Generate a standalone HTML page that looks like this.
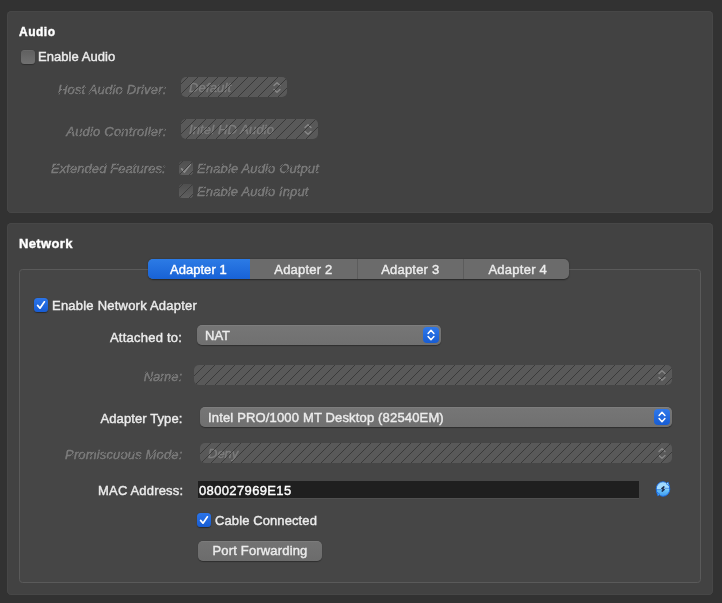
<!DOCTYPE html>
<html lang="en">
<head>
<meta charset="utf-8">
<title>Settings - Audio / Network</title>
<style>
  html, body { margin: 0; padding: 0; }
  body {
    width: 722px; height: 603px; overflow: hidden; position: relative;
    background: #323232;
    font-family: "Liberation Sans", sans-serif; font-size: 13px; color: #ececec;
    -webkit-font-smoothing: antialiased;
  }
  .abs { position: absolute; }
  .panel {
    position: absolute; left: 7px; width: 706px;
    background: #424242; border-radius: 4.5px;
    box-shadow: inset 0 0 0 1px #474747;
  }
  .t { position: absolute; line-height: 16px; height: 16px; white-space: pre; will-change: transform; -webkit-text-stroke: 0.4px currentColor; }
  .b { font-weight: bold; color: #ffffff; }
  .r { text-align: right; }
  /* disabled (hatched) look */
  .dis { font-style: italic; color: #7c7c7c; -webkit-text-stroke: 0.4px #7c7c7c; margin-top: 0.7px; }
  .hatch::after {
    content: ""; position: absolute; left: 0; top: 0; right: 0; bottom: 0;
    background-image: linear-gradient(135deg,
      var(--hc) 0, var(--hc) 3.0%, transparent 3.0%, transparent 47.0%,
      var(--hc) 47.0%, var(--hc) 53.0%, transparent 53.0%, transparent 97.0%,
      var(--hc) 97.0%, var(--hc) 100%);
    background-size: 10px 10px;
    background-position: var(--hp, 0px) 0px;
    pointer-events: none; border-radius: inherit;
  }
  .p1 { --hc: #424242; }
  .p2 { --hc: #464646; }
  .dd-dis {
    position: absolute; height: 20px; border-radius: 5px; background: #595959; --hc: #393939;
  }
  .dd {
    position: absolute; height: 20px; border-radius: 5px;
    background: linear-gradient(#767676, #707070);
    box-shadow: 0 0.5px 1px rgba(0,0,0,0.35), inset 0 0.5px 0 rgba(255,255,255,0.12);
  }
  .stepper {
    position: absolute; right: 2px; top: 2px; width: 16px; height: 16px; border-radius: 4px;
    background: linear-gradient(#2f78ea, #175cd3);
  }
  .cb {
    position: absolute; width: 14px; height: 14px; border-radius: 3.5px;
  }
  .cb.on { background: linear-gradient(#2b74e8, #175cd3); box-shadow: 0 0.5px 1px rgba(0,0,0,0.4); }
  .cb.off { background: linear-gradient(#5f5f5f, #717171); box-shadow: 0 0.5px 1px rgba(0,0,0,0.3), inset 0 0.5px 0 rgba(255,255,255,0.1); }
  .cb.disabled { background: linear-gradient(#4f4f4f, #5f5f5f); --hc: #3d3d3d; --hp: 4px; border-radius: 3.5px; }
  svg { position: absolute; overflow: visible; }
</style>
</head>
<body>

<!-- ================= AUDIO PANEL ================= -->
<div class="panel" style="top:11px; height:202px;"></div>

<div class="t b" style="left:19px; top:24px; font-size:12px; letter-spacing:0.5px;">Audio</div>

<div class="cb off" style="left:21px; top:50px;"></div>
<div class="t" style="left:38.4px; top:49.1px; letter-spacing:0.05px;">Enable Audio</div>

<div class="t dis r hatch p1" style="left:40px; width:126.5px; top:81px; letter-spacing:0.2px;">Host Audio Driver:</div>
<div class="dd-dis hatch" style="left:181px; top:77px; width:106px; --hp:7px;">
  <div class="t dis" style="left:7.7px; top:2px; letter-spacing:0.16px;">Default</div>
  <svg style="left:91px; top:4px;" width="10" height="13" viewBox="0 0 10 13"><path d="M2 4.6 L5 1.7 L8 4.6 M2 8.4 L5 11.3 L8 8.4" fill="none" stroke="#868686" stroke-width="1.4" stroke-linecap="round" stroke-linejoin="round"/></svg>
</div>

<div class="t dis r hatch p1" style="left:40px; width:126.5px; top:123px; letter-spacing:0.2px;">Audio Controller:</div>
<div class="dd-dis hatch" style="left:181px; top:119px; width:137px; --hp:5px;">
  <div class="t dis" style="left:7.5px; top:2px; letter-spacing:0.13px;">Intel HD Audio</div>
  <svg style="left:121.5px; top:4px;" width="10" height="13" viewBox="0 0 10 13"><path d="M2 4.6 L5 1.7 L8 4.6 M2 8.4 L5 11.3 L8 8.4" fill="none" stroke="#868686" stroke-width="1.4" stroke-linecap="round" stroke-linejoin="round"/></svg>
</div>

<div class="t dis r hatch p1" style="left:40px; width:125.8px; top:160.3px; letter-spacing:0.08px;">Extended Features:</div>
<div class="cb disabled hatch" style="left:179px; top:161px;">
  <svg style="left:0; top:0;" width="14" height="14" viewBox="0 0 14 14"><path d="M2.6 7.8 L5.4 11.0 L11.2 3.4" fill="none" stroke="#8c8c8c" stroke-width="1.7" stroke-linecap="round" stroke-linejoin="round"/></svg>
</div>
<div class="t dis hatch p1" style="left:197px; top:160.1px; letter-spacing:0.13px;">Enable Audio Output</div>
<div class="cb disabled hatch" style="left:179px; top:184.2px;"></div>
<div class="t dis hatch p1" style="left:197px; top:183.1px; letter-spacing:0.12px;">Enable Audio Input</div>

<!-- ================= NETWORK PANEL ================= -->
<div class="panel" style="top:223px; height:372px;"></div>

<div class="t b" style="left:19px; top:235.5px; letter-spacing:0.36px;">Network</div>

<!-- tab pane -->
<div class="abs" style="left:19px; top:269px; width:682px; height:314px; box-sizing:border-box; border:1px solid #5a5a5a; border-radius:3.5px; background:#464646;"></div>

<!-- tab bar -->
<div class="abs" style="left:148px; top:259px; width:421px; height:20px; border-radius:5px; overflow:hidden; background:#6b6b6b; box-shadow:0 0.5px 1.5px rgba(0,0,0,0.45);">
  <div class="abs" style="left:0; top:0; width:102px; height:20px; background:linear-gradient(#2c7be5,#1862d6);"></div>
  <div class="abs" style="left:208.5px; top:0; width:1px; height:20px; background:#5c5c5c;"></div>
  <div class="abs" style="left:315px; top:0; width:1px; height:20px; background:#5c5c5c;"></div>
</div>
<div class="t" style="left:169.6px; top:261.5px; color:#fff; letter-spacing:0.03px;">Adapter 1</div>
<div class="t" style="left:250px; width:106.7px; top:261.5px; text-align:center; letter-spacing:0.19px;">Adapter 2</div>
<div class="t" style="left:356.7px; width:106.6px; top:261.5px; text-align:center; letter-spacing:0.19px;">Adapter 3</div>
<div class="t" style="left:463.3px; width:109.5px; top:261.5px; text-align:center; letter-spacing:0.25px;">Adapter 4</div>

<!-- Enable network adapter -->
<div class="cb on" style="left:34px; top:298px;">
  <svg style="left:0; top:0;" width="14" height="14" viewBox="0 0 14 14"><path d="M3.6 7.4 L6 10.2 L10.4 3.8" fill="none" stroke="#fff" stroke-width="1.7" stroke-linecap="round" stroke-linejoin="round"/></svg>
</div>
<div class="t" style="left:52px; top:297.5px; letter-spacing:0.22px;">Enable Network Adapter</div>

<!-- Attached to -->
<div class="t r" style="left:60px; width:122.2px; top:329.5px; letter-spacing:0.24px;">Attached to:</div>
<div class="dd" style="left:197px; top:325px; width:244px;">
  <div class="t" style="left:8px; top:2.5px;">NAT</div>
  <div class="stepper"><svg style="left:0; top:0;" width="16" height="16" viewBox="0 0 16 16"><path d="M5.1 6.5 L8 3.3 L10.9 6.5 M5.1 9.5 L8 12.7 L10.9 9.5" fill="none" stroke="#fff" stroke-width="1.5" stroke-linecap="round" stroke-linejoin="round"/></svg></div>
</div>

<!-- Name -->
<div class="t dis r hatch p2" style="left:60px; width:122px; top:368.5px;">Name:</div>
<div class="dd-dis hatch" style="left:194px; top:364.5px; width:478px; height:20.5px; --hc:#3a3a3a; --hp:1px;">
  <svg style="left:463px; top:4px;" width="10" height="13" viewBox="0 0 10 13"><path d="M2 4.6 L5 1.7 L8 4.6 M2 8.4 L5 11.3 L8 8.4" fill="none" stroke="#868686" stroke-width="1.4" stroke-linecap="round" stroke-linejoin="round"/></svg>
</div>

<!-- Adapter type -->
<div class="t r" style="left:60px; width:122.5px; top:410.5px; letter-spacing:0.1px;">Adapter Type:</div>
<div class="dd" style="left:200px; top:407px; width:472px;">
  <div class="t" style="left:8.3px; top:2.5px; letter-spacing:0.16px;">Intel PRO/1000 MT Desktop (82540EM)</div>
  <div class="stepper"><svg style="left:0; top:0;" width="16" height="16" viewBox="0 0 16 16"><path d="M5.1 6.5 L8 3.3 L10.9 6.5 M5.1 9.5 L8 12.7 L10.9 9.5" fill="none" stroke="#fff" stroke-width="1.5" stroke-linecap="round" stroke-linejoin="round"/></svg></div>
</div>

<!-- Promiscuous mode -->
<div class="t dis r hatch p2" style="left:60px; width:122.5px; top:446px; letter-spacing:0.15px;">Promiscuous Mode:</div>
<div class="dd-dis hatch" style="left:200px; top:443px; width:472px; --hc:#3a3a3a; --hp:1px;">
  <div class="t dis" style="left:8.4px; top:2px;">Deny</div>
  <svg style="left:457px; top:4px;" width="10" height="13" viewBox="0 0 10 13"><path d="M2 4.6 L5 1.7 L8 4.6 M2 8.4 L5 11.3 L8 8.4" fill="none" stroke="#868686" stroke-width="1.4" stroke-linecap="round" stroke-linejoin="round"/></svg>
</div>

<!-- MAC address -->
<div class="t r" style="left:60px; width:123.2px; top:483px; letter-spacing:0.17px;">MAC Address:</div>
<div class="abs" style="left:198px; top:480.5px; width:441px; height:17.5px; background:#1f1f1f; box-shadow:0 0.5px 0 #5a5a5a;"></div>
<div class="t" style="left:199px; top:483px; color:#fff; letter-spacing:0.36px;">080027969E15</div>

<!-- refresh icon -->
<svg style="left:655.05px; top:481.35px;" width="16" height="16" viewBox="0 0 16 16">
  <defs>
    <linearGradient id="rg" x1="0" y1="0" x2="0" y2="1">
      <stop offset="0" stop-color="#9fd8ff"/><stop offset="0.5" stop-color="#a4ddff"/>
      <stop offset="0.56" stop-color="#6cc4fa"/><stop offset="1" stop-color="#3c9af0"/>
    </linearGradient>
  </defs>
  <ellipse cx="8" cy="8" rx="6.8" ry="7.3" fill="url(#rg)" stroke="#1a6ce6" stroke-width="0.9"/>
  <path d="M10.0 -0.3 L11.5 2.6 L12.6 0.4 Z" fill="#464646"/>
  <path d="M6.0 16.3 L4.5 13.4 L3.4 15.6 Z" fill="#464646"/>
  <path d="M11.0 2.6 L13.1 1.0 L14.4 5.0 Z" fill="#a4ddff" stroke="#1a6ce6" stroke-width="0.7" stroke-linejoin="round"/>
  <path d="M5.0 13.4 L2.9 15.0 L1.6 11.0 Z" fill="#48a4f3" stroke="#1a6ce6" stroke-width="0.7" stroke-linejoin="round"/>
  <path d="M1.0 8.7 H6.2 M9.8 7.3 H15.0" stroke="#1a5fd0" stroke-width="0.6" fill="none"/>
  <path d="M8.9 5.9 L6.9 7.6 L9.1 8.5 L7.2 10.1" fill="none" stroke="#1d2f55" stroke-width="1.6" stroke-linejoin="round" stroke-linecap="round"/>
</svg>

<!-- Cable connected -->
<div class="cb on" style="left:197px; top:513px;">
  <svg style="left:0; top:0;" width="14" height="14" viewBox="0 0 14 14"><path d="M3.6 7.4 L6 10.2 L10.4 3.8" fill="none" stroke="#fff" stroke-width="1.7" stroke-linecap="round" stroke-linejoin="round"/></svg>
</div>
<div class="t" style="left:215.2px; top:512.5px; letter-spacing:0.1px;">Cable Connected</div>

<!-- Port forwarding button -->
<div class="abs" style="left:198px; top:541px; width:124px; height:20px; border-radius:5px; background:linear-gradient(#737373,#6c6c6c); box-shadow:0 0.5px 1px rgba(0,0,0,0.35), inset 0 0.5px 0 rgba(255,255,255,0.12);"></div>
<div class="t" style="left:198px; width:124px; text-align:center; top:542.5px; letter-spacing:0.17px;">Port Forwarding</div>

</body>
</html>
